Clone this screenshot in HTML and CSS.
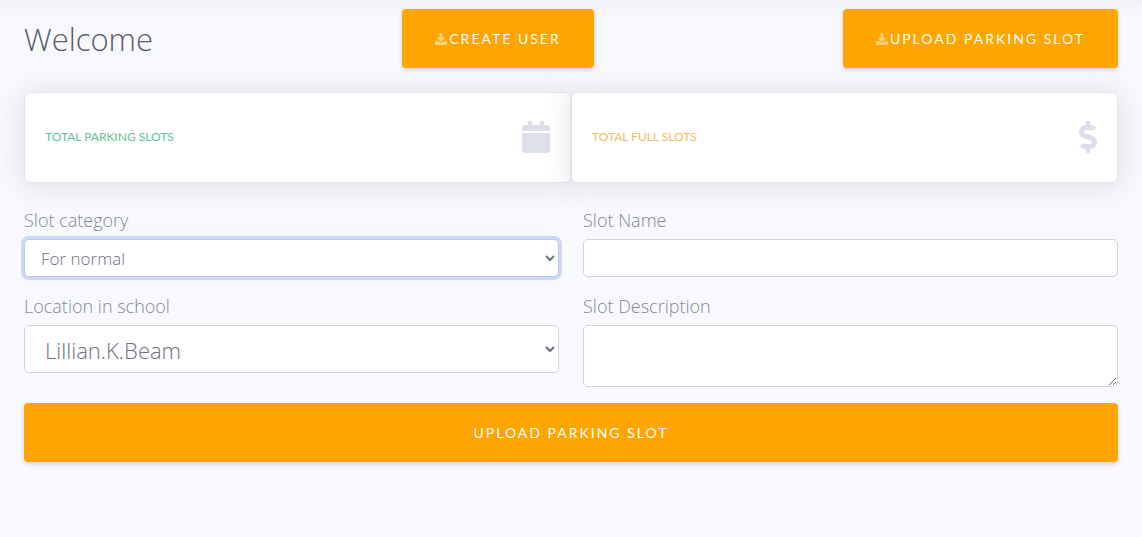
FILE: index.html
```html
<!DOCTYPE html>
<html lang="en">
<head>
<meta charset="utf-8">
<meta name="viewport" content="width=device-width, initial-scale=1">
<title>Parking slots</title>
<link rel="stylesheet" href="styles.css">
</head>
<body>
<main class="page">
  <header class="page-head">
    <h1 class="page-title">Welcome</h1>
    <button class="btn" type="button"><svg class="btn-icon" viewBox="0 0 512 512" aria-hidden="true"><path d="M216 0h80c13.300 0 24 10.700 24 24v168h87.700c17.800 0 26.700 21.500 14.100 34.100L269.700 378.300c-7.500 7.500-19.800 7.500-27.300 0L90.100 226.100c-12.600-12.600-3.700-34.100 14.100-34.100H192V24c0-13.300 10.700-24 24-24zm296 376v112c0 13.300-10.700 24-24 24H24c-13.300 0-24-10.700-24-24V376c0-13.300 10.700-24 24-24h146.700l49 49c20.100 20.100 52.500 20.100 72.600 0l49-49H488c13.300 0 24 10.700 24 24z"/></svg>CREATE USER</button>
    <button class="btn" type="button"><svg class="btn-icon" viewBox="0 0 512 512" aria-hidden="true"><path d="M216 0h80c13.300 0 24 10.700 24 24v168h87.700c17.800 0 26.700 21.500 14.100 34.100L269.700 378.300c-7.500 7.500-19.800 7.500-27.300 0L90.100 226.100c-12.600-12.600-3.700-34.100 14.100-34.100H192V24c0-13.300 10.700-24 24-24zm296 376v112c0 13.300-10.700 24-24 24H24c-13.300 0-24-10.700-24-24V376c0-13.300 10.700-24 24-24h146.700l49 49c20.100 20.100 52.500 20.100 72.600 0l49-49H488c13.300 0 24 10.700 24 24z"/></svg>UPLOAD PARKING SLOT</button>
  </header>

  <section class="cards">
    <article class="card">
      <h2 class="card-title card-title-success">TOTAL PARKING SLOTS</h2>
      <svg class="card-icon card-icon-calendar" viewBox="0 0 448 512" aria-hidden="true"><path d="M12 192h424c6.600 0 12 5.400 12 12v260c0 26.500-21.500 48-48 48H48c-26.500 0-48-21.500-48-48V204c0-6.600 5.400-12 12-12zm436-44v-36c0-26.500-21.500-48-48-48h-48V12c0-6.600-5.400-12-12-12h-40c-6.600 0-12 5.400-12 12v52H160V12c0-6.600-5.400-12-12-12h-40c-6.600 0-12 5.400-12 12v52H48C21.500 64 0 85.500 0 112v36c0 6.600 5.400 12 12 12h424c6.600 0 12-5.400 12-12z"/></svg>
    </article>
    <article class="card">
      <h2 class="card-title card-title-warning">TOTAL FULL SLOTS</h2>
      <svg class="card-icon card-icon-dollar" viewBox="0 0 288 512" aria-hidden="true"><path d="M209.200 233.400l-108-31.600C88.700 198.200 80 186.500 80 173.500c0-16.300 13.200-29.500 29.500-29.500h66.300c12.200 0 24.200 3.700 34.200 10.500 6.100 4.100 14.300 3.100 19.500-2l34.800-34c7.100-6.900 6.100-18.400-1.800-24.500C238 74.800 207.400 64.100 176 64V16c0-8.800-7.200-16-16-16h-32c-8.800 0-16 7.200-16 16v48h-2.500C45.800 64-5.400 118.700.5 183.600c4.200 46.100 39.400 83.600 83.800 96.600l102.500 30c12.500 3.700 21.200 15.300 21.200 28.300 0 16.300-13.200 29.500-29.500 29.500h-66.300C100 368 88 364.300 78 357.500c-6.100-4.100-14.300-3.100-19.500 2l-34.800 34c-7.100 6.900-6.100 18.400 1.800 24.500 24.500 19.200 55.100 29.900 86.500 30v48c0 8.800 7.200 16 16 16h32c8.800 0 16-7.200 16-16v-48.200c46.600-.9 90.300-28.600 105.700-72.700 21.500-61.600-14.600-124.800-72.500-141.700z"/></svg>
    </article>
  </section>

  <form class="slot-form">
    <div class="field">
      <label class="label" for="category">Slot category</label>
      <select class="control control-active" id="category"><option>For normal</option></select>
    </div>
    <div class="field">
      <label class="label" for="name">Slot Name</label>
      <input class="control" id="name" type="text">
    </div>
    <div class="field">
      <label class="label" for="location">Location in school</label>
      <select class="control control-large" id="location"><option>Lillian.K.Beam</option></select>
    </div>
    <div class="field">
      <label class="label" for="description">Slot Description</label>
      <textarea class="control control-area" id="description" rows="2"></textarea>
    </div>
    <button class="btn btn-wide" type="button">UPLOAD PARKING SLOT</button>
  </form>
</main>
</body>
</html>
```
FILE: styles.css
```css
*,
*::before,
*::after {
  box-sizing: border-box;
}

body {
  margin: 0;
  min-height: 100vh;
  background: #f8f9fc linear-gradient(#f1f2f6, #f8f9fc) no-repeat top / 100% 20px;
  color: #858796;
  font-family: "Open Sans", "Noto Sans", sans-serif;
  font-size: 17px;
  font-weight: 300;
  line-height: 24px;
}

.page {
  padding: 9px 24px 24px;
}

.page-head {
  display: flex;
  align-items: center;
  justify-content: space-between;
  margin-bottom: 24px;
}

.page-title {
  margin: 0;
  color: #5a5c69;
  font-size: 31px;
  font-weight: 300;
  line-height: 36px;
}

.btn {
  display: inline-flex;
  align-items: center;
  justify-content: center;
  min-height: 59px;
  padding: 16px 33px;
  border: 0;
  border-radius: 4px;
  background: #ffa500;
  box-shadow: 0 2px 4px rgba(58, 59, 69, 0.2);
  color: #fff;
  font-family: Lato, sans-serif;
  font-size: 14px;
  font-weight: 400;
  letter-spacing: 2px;
  line-height: 20px;
}

.btn-icon {
  width: 12px;
  height: 12px;
  margin-right: 2px;
  fill: rgba(255, 255, 255, 0.5);
}

.cards {
  display: grid;
  grid-template-columns: 1fr 1fr;
  margin-bottom: 24px;
}

.card {
  display: flex;
  align-items: center;
  justify-content: space-between;
  min-height: 91px;
  padding: 18px 20px 20px;
  border: 1px solid #e3e6f0;
  border-radius: 6px;
  background: #fff;
  box-shadow: 0 2px 28px rgba(58, 59, 69, 0.15);
}

.card-title {
  margin: 0;
  font-family: Lato, sans-serif;
  font-size: 12px;
  font-weight: 400;
  line-height: 16px;
}

.card-title-success {
  color: #5fc596;
}

.card-title-warning {
  color: #f4b968;
}

.card-icon {
  height: 32px;
  fill: #dddfeb;
}

.card-icon-calendar {
  width: 28px;
}

.card-icon-dollar {
  width: 18px;
}

.slot-form {
  display: grid;
  grid-template-columns: 1fr 1fr;
  gap: 16px 24px;
}

.field {
  display: flex;
  flex-direction: column;
  gap: 6px;
}

.label {
  font-size: 18px;
  line-height: 26px;
}

.control {
  width: 100%;
  height: 38px;
  padding: 6px 12px;
  border: 1px solid #d1d3e2;
  border-radius: 5px;
  outline: 0;
  background: #fff;
  color: #6e707e;
  font: inherit;
}

.control-active {
  border-color: #bac8f3;
  box-shadow: 0 0 0 3px rgba(78, 115, 223, 0.25);
}

.control-large {
  height: 48px;
  padding: 8px 16px;
  font-size: 22px;
}

.control-area {
  height: 62px;
  resize: vertical;
}

.btn-wide {
  grid-column: 1 / -1;
}
```
